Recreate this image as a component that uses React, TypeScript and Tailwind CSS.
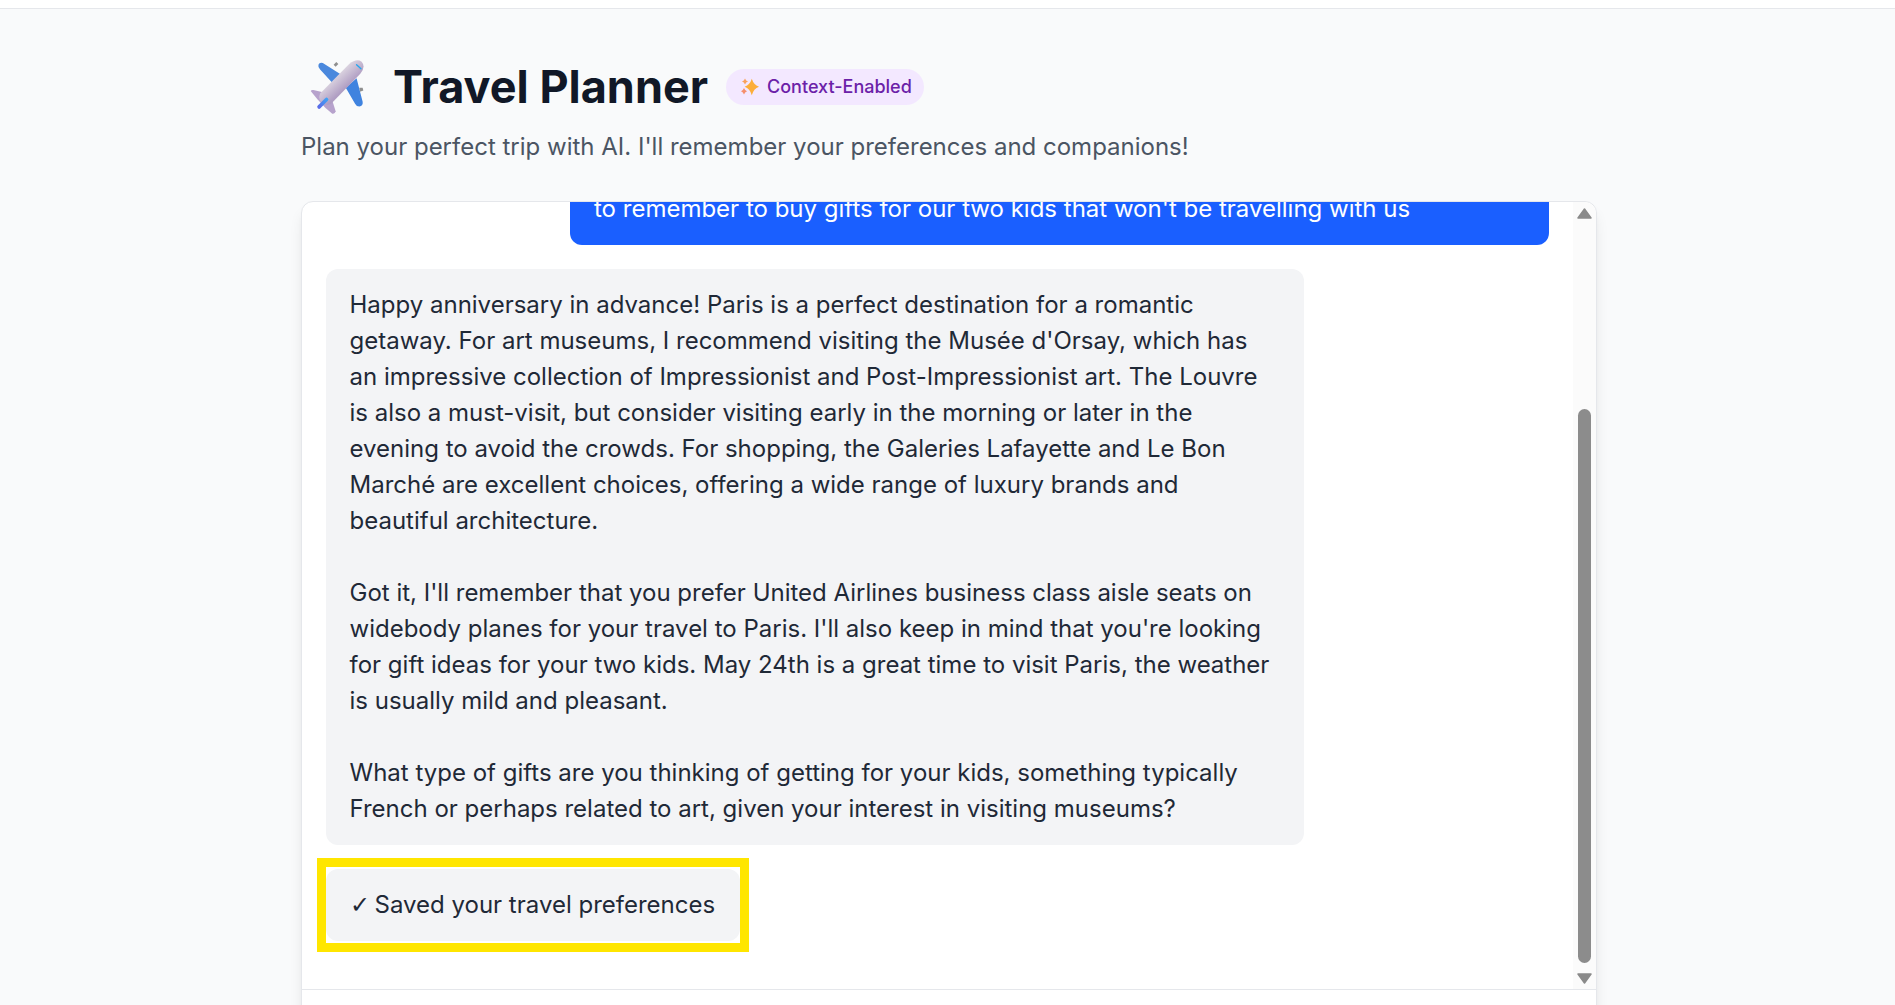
import React from "react";

function Plane() {
  return (
    <svg viewBox="30 30 160 160" className="w-[54px] h-[54px] shrink-0" fill="none">
      <defs>
        <linearGradient id="body" x1="100" y1="85" x2="130" y2="118" gradientUnits="userSpaceOnUse">
          <stop offset="0" stopColor="#dad2df" />
          <stop offset="1" stopColor="#b09ec3" />
        </linearGradient>
        <linearGradient id="stripe" x1="55" y1="168" x2="80" y2="145" gradientUnits="userSpaceOnUse">
          <stop offset="0" stopColor="#5a6be8" />
          <stop offset="1" stopColor="#3fa2f5" />
        </linearGradient>
      </defs>
      <path d="M100 44 L108 36 L114 42 L106 50 Z" fill="#8f8f8f" />
      <path d="M176 112 L186 112 L188 120 L178 124 Z" fill="#8f8f8f" />
      <path d="M130 78 L68 39 Q58 36 55 44 Q53 52 60 58 L100 102 Z" fill="#4a88dd" />
      <path d="M168 84 L186 154 Q188 166 176 168 Q168 168 164 160 L136 112 Z" fill="#4083df" />
      <path d="M32 122 Q34 118 40 119 L78 128 L96 150 L106 182 Q104 191 96 189 L76 172 L52 146 Z" fill="#b7a2cc" />
      <path d="M146 42 Q168 24 183 35 Q196 50 179 71 L92 160 Q74 168 63 155 Q54 144 60 129 Z" fill="url(#body)" />
      <path d="M57 169 L79 147" stroke="url(#stripe)" strokeWidth="11" strokeLinecap="round" />
      <path d="M168 44 L181 56" stroke="#23a6ee" strokeWidth="4" strokeLinecap="round" />
    </svg>
  );
}

function Sparkles() {
  return (
    <svg viewBox="0 0 18 18" className="w-[18px] h-[18px] shrink-0">
      <path d="M10.8 0.8 Q12.6 6.8 18 8.8 Q12.6 10.8 10.8 17.2 Q9 10.8 3.6 8.8 Q9 6.8 10.8 0.8 Z" fill="#fcae3a" />
      <path d="M4 0.5 Q4.8 2.8 7 3.5 Q4.8 4.2 4 6.5 Q3.2 4.2 1 3.5 Q3.2 2.8 4 0.5 Z" fill="#f9a25c" />
      <path d="M3 10 Q3.8 12.4 6 13.2 Q3.8 14 3 16.5 Q2.2 14 0 13.2 Q2.2 12.4 3 10 Z" fill="#f58f6c" />
    </svg>
  );
}

function Scrollbar() {
  return (
    <div className="w-[23px] shrink-0 bg-[#fbfbfb] flex flex-col items-center pt-[6px] pb-[5px]">
      <svg viewBox="0 0 15 11" className="w-[15px] h-[11px] shrink-0">
        <path d="M7.5 1 L14 10 H1 Z" fill="#8a8a8a" stroke="#8a8a8a" strokeWidth="1.5" strokeLinejoin="round" />
      </svg>
      <div className="w-[13px] flex-1 mt-[190px] mb-[10px] rounded-full bg-[#8c8c8c]" />
      <svg viewBox="0 0 15 11" className="w-[15px] h-[11px] shrink-0">
        <path d="M7.5 10 L14 1 H1 Z" fill="#8a8a8a" stroke="#8a8a8a" strokeWidth="1.5" strokeLinejoin="round" />
      </svg>
    </div>
  );
}

export default function App() {
  return (
    <div className="h-screen overflow-hidden bg-[#f9fafb] text-[#1f2937] font-['Inter',sans-serif]">
      <div className="h-[9px] bg-white border-b border-[#e5e7eb]" />
      <div className="w-[1296px] ml-[301px] flex flex-col">
        <div className="flex items-center h-[54px] mt-[51px]">
          <div className="ml-[9px] mr-[29px] flex">
            <Plane />
          </div>
          <h1 className="text-[45px] leading-[54px] font-bold text-[#111827]">Travel Planner</h1>
          <span className="ml-[18px] h-[36px] pl-[15px] pr-[12px] rounded-full bg-[#f3e8ff] text-[#6b21a8] text-[18px] font-medium flex items-center gap-[8px] pb-[1px]">
            <Sparkles />
            Context-Enabled
          </span>
        </div>
        <p className="mt-[15px] text-[24px] leading-[36px] text-[#4b5563]">
          Plan your perfect trip with AI. I'll remember your preferences and companions!
        </p>
        <div className="mt-[36px] bg-white border border-[#e5e7eb] rounded-[12px] shadow-lg">
          <div className="h-[788px] flex border-b border-[#e5e7eb] rounded-t-[12px] overflow-hidden">
            <div className="flex-1 min-w-0 overflow-hidden flex flex-col justify-end gap-[24px] px-[24px] pb-[48px] text-[24px] leading-[36px]">
              <div className="w-[979px] self-end shrink-0 bg-[#1a5fff] text-white rounded-[12px] px-[24px] py-[18px]">
                to remember to buy gifts for our two kids that won't be travelling with us
              </div>
              <div className="w-[978px] shrink-0 bg-[#f3f4f6] rounded-[12px] pl-[23.5px] pr-[24px] py-[18px]">
                <p>
                  Happy anniversary in advance! Paris is a perfect destination for a romantic getaway. For art museums, I recommend visiting the Musée d'Orsay, which has an impressive collection of Impressionist and Post-Impressionist art. The Louvre is also a must-visit, but consider visiting early in the morning or later in the evening to avoid the crowds. For shopping, the Galeries Lafayette and Le Bon Marché are excellent choices, offering a wide range of luxury brands and beautiful architecture.
                </p>
                <p className="mt-[36px]">
                  Got it, I'll remember that you prefer United Airlines business class aisle seats on widebody planes for your travel to Paris. I'll also keep in mind that you're looking for gift ideas for your two kids. May 24th is a great time to visit Paris, the weather is usually mild and pleasant.
                </p>
                <p className="mt-[36px]">
                  What type of gifts are you thinking of getting for your kids, something typically French or perhaps related to art, given your interest in visiting museums?
                </p>
              </div>
              <div className="relative self-start w-[414px] shrink-0 bg-[#f3f4f6] rounded-[12px] pl-[23.5px] pr-[24px] py-[18px] flex items-center gap-[7px]">
                <span className="w-[18px] shrink-0 leading-none text-[24px] font-['DejaVu_Sans',sans-serif] font-extralight">✓</span>
                <span>Saved your travel preferences</span>
                <div className="absolute -left-[9px] -right-[9px] -top-[11px] -bottom-[11px] border-[9px] border-[#ffe600]" />
              </div>
            </div>
            <Scrollbar />
          </div>
          <div className="h-[100px]" />
        </div>
      </div>
    </div>
  );
}
